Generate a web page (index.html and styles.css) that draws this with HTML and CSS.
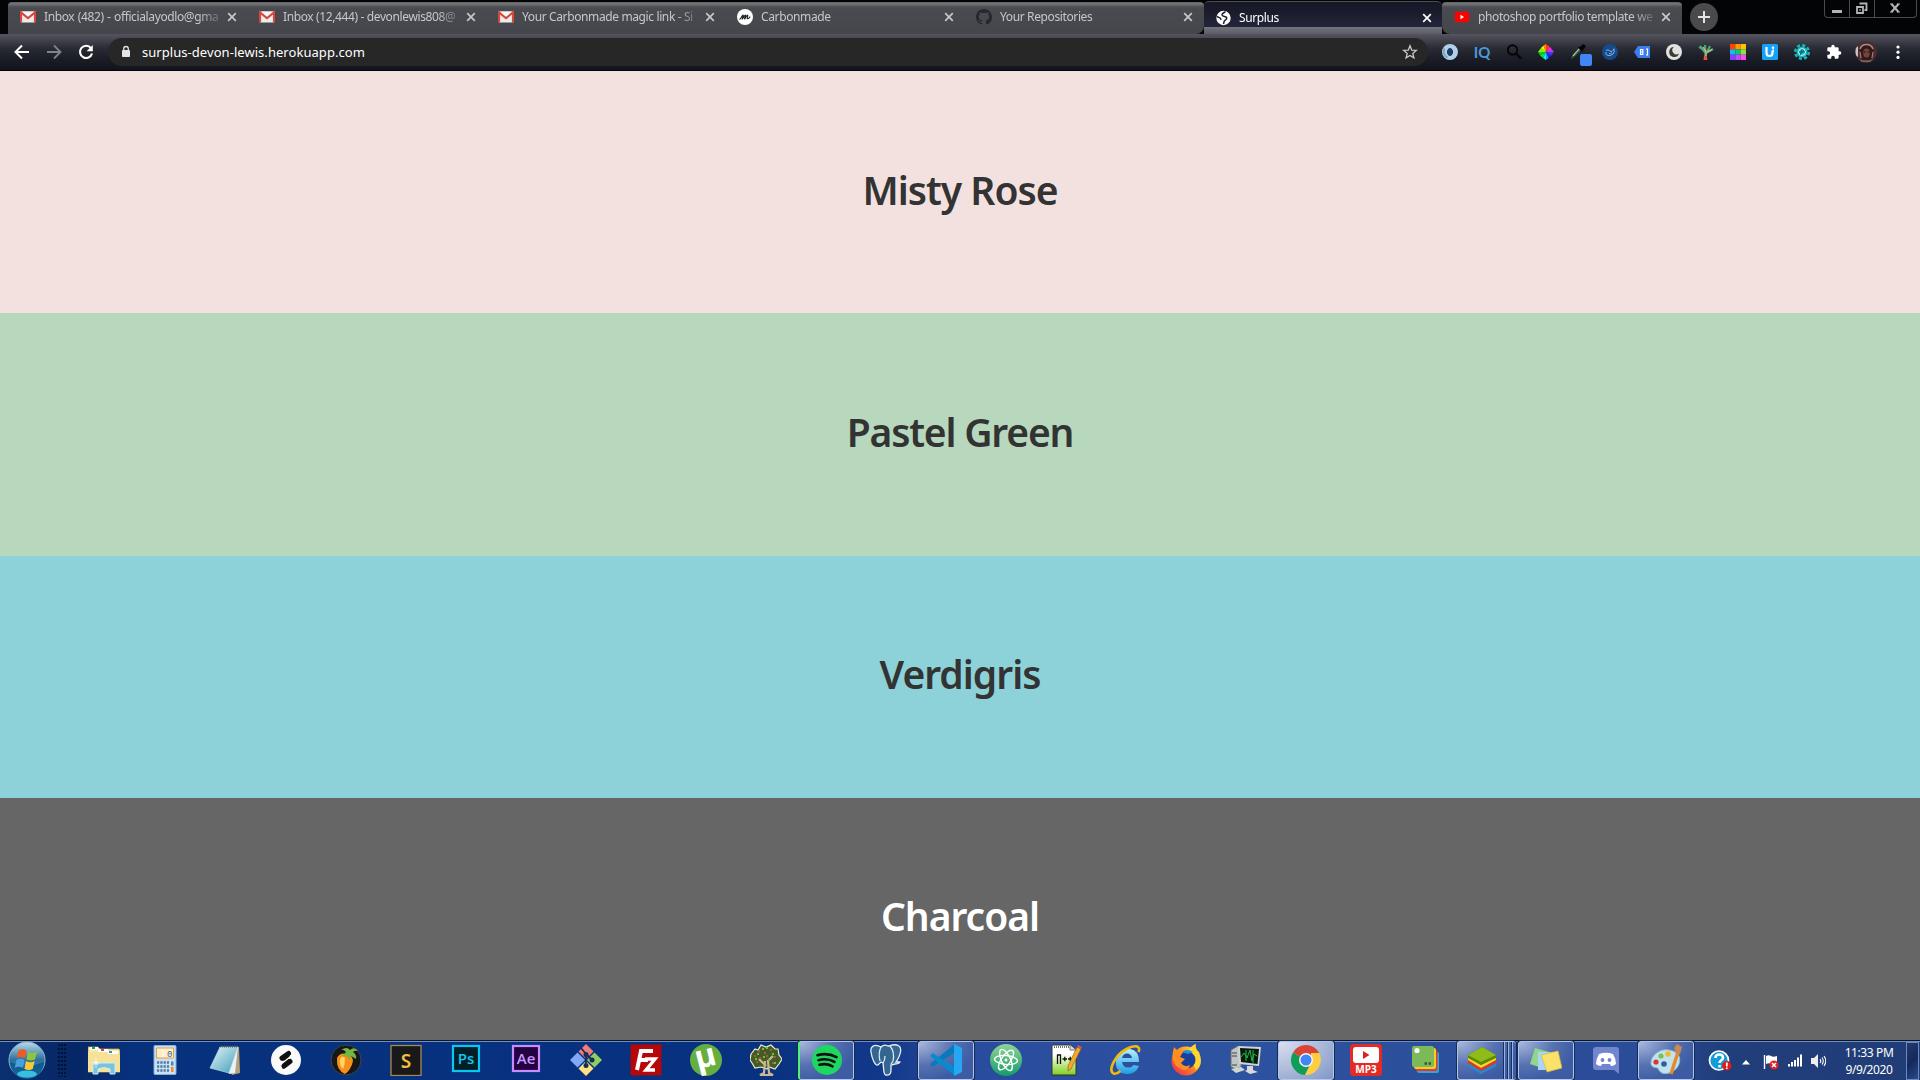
FILE: index.html
```html
<!DOCTYPE html>
<html lang="en">
<head>
<meta charset="utf-8">
<title>Surplus</title>
<link rel="stylesheet" href="styles.css">
</head>
<body>
<svg class="defs" width="0" height="0" aria-hidden="true">
  <defs>
    <linearGradient id="glass" x1="0" y1="0" x2="0" y2="1"><stop offset="0" stop-color="#b9dcea"/><stop offset=".5" stop-color="#2b6f9c"/><stop offset="1" stop-color="#1fb4e8"/></linearGradient>
    <linearGradient id="folder" x1="0" y1="0" x2="0" y2="1"><stop offset="0" stop-color="#fbefb4"/><stop offset="1" stop-color="#e6c862"/></linearGradient>
    <linearGradient id="pad" x1="0" y1="0" x2="1" y2="1"><stop offset="0" stop-color="#e5f6fa"/><stop offset="1" stop-color="#3e9cb8"/></linearGradient>
    <linearGradient id="fire" x1="1" y1="0" x2="0" y2="1"><stop offset="0" stop-color="#fff13a"/><stop offset=".45" stop-color="#ff8a1c"/><stop offset="1" stop-color="#e8205c"/></linearGradient>
    <linearGradient id="npp" x1="0" y1="0" x2="0" y2="1"><stop offset=".3" stop-color="#fff"/><stop offset="1" stop-color="#7fd01c"/></linearGradient>
    <linearGradient id="ie" x1="0" y1="0" x2="0" y2="1"><stop offset="0" stop-color="#b8f0ff"/><stop offset="1" stop-color="#1b9de2"/></linearGradient>
    <linearGradient id="atom" x1="0" y1="0" x2="0" y2="1"><stop offset="0" stop-color="#8fd694"/><stop offset="1" stop-color="#149b6c"/></linearGradient>
    <symbol id="gmail" viewBox="0 0 16 16"><path d="M1 2.5h14v11H1z" fill="#ececec"/><path d="M1 13.500V3.500L8 9l7-5.500v10" fill="none" stroke="#d8483a" stroke-width="2.200"/><path d="M2 2.500h12L8 7.500z" fill="#f5f5f5"/></symbol>
    <symbol id="close" viewBox="0 0 10 10"><path d="M1.200 1.200l7.600 7.600M8.800 1.200L1.200 8.800" stroke="currentColor" stroke-width="1.700"/></symbol>
  </defs>
</svg>

<header class="browser">
  <div class="tabstrip">
    <div class="tab first"><svg class="fav"><use href="#gmail"/></svg><span class="tab-title spaced">Inbox (482) - officialayodlo@gma</span><svg class="close"><use href="#close"/></svg></div>
    <div class="tab"><svg class="fav"><use href="#gmail"/></svg><span class="tab-title">Inbox (12,444) - devonlewis808@</span><svg class="close"><use href="#close"/></svg></div>
    <div class="tab"><svg class="fav"><use href="#gmail"/></svg><span class="tab-title">Your Carbonmade magic link - Si</span><svg class="close"><use href="#close"/></svg></div>
    <div class="tab"><svg class="fav" viewBox="0 0 16 16"><circle cx="8" cy="8" r="8" fill="#fff"/><path d="M2.500 10.500c1.500-.5 2.500-4.500 3.500-4.500s-1.300 4-.8 4S7.500 6 8.300 6s-1.200 4-.7 4 2-4 2.900-4-.8 3.500-.3 3.700 2-.7 3-2" fill="none" stroke="#222" stroke-width="1.100"/></svg><span class="tab-title">Carbonmade</span><svg class="close"><use href="#close"/></svg></div>
    <div class="tab before-active"><svg class="fav" viewBox="0 0 16 16"><path fill="#24292e" d="M8 0C3.580 0 0 3.580 0 8c0 3.540 2.290 6.530 5.470 7.590.4.070.55-.17.55-.38v-1.490c-2.010.37-2.530-.49-2.690-.94-.09-.23-.48-.94-.82-1.130-.28-.15-.68-.52-.01-.53.63-.01 1.080.58 1.230.82.720 1.210 1.870.87 2.330.66.070-.52.280-.87.510-1.070-1.780-.2-3.640-.89-3.640-3.950 0-.87.310-1.590.82-2.150-.08-.2-.36-1.020.080-2.120 0 0 .67-.21 2.200.82a7.600 7.600 0 014 0c1.530-1.040 2.200-.82 2.200-.82.440 1.100.160 1.920.080 2.120.51.560.82 1.270.82 2.150 0 3.070-1.870 3.750-3.650 3.950.29.250.54.730.54 1.480v2.200c0 .21.150.46.550.38A8 8 0 0016 8c0-4.420-3.580-8-8-8z"/></svg><span class="tab-title">Your Repositories</span><svg class="close"><use href="#close"/></svg></div>
    <div class="tab active"><svg class="fav" viewBox="0 0 16 16"><circle cx="7.500" cy="8" r="7.200" fill="#fff"/><path d="M9.500 1.500C8 3 6 3 6 4.800S8.500 6.300 10 7s.5 2.500-.8 3.200-1.200 2-1.700 3.800" fill="none" stroke="#20222e" stroke-width="1.500"/><path d="M1 6.500l3.300 1.700.8 1.600" fill="none" stroke="#20222e" stroke-width="1.500"/></svg><span class="tab-title">Surplus</span><svg class="close"><use href="#close"/></svg></div>
    <div class="tab last"><svg class="fav" viewBox="0 0 16 16"><rect x=".8" y="2.800" width="14.400" height="10.400" rx="2.500" fill="#f00"/><path d="M6.500 5.800v4.400L10 8z" fill="#fff"/></svg><span class="tab-title">photoshop portfolio template we</span><svg class="close"><use href="#close"/></svg></div>
    <div class="new-tab"><svg width="14" height="14" viewBox="0 0 14 14"><path d="M7 1v12M1 7h12" stroke="#e3e3e3" stroke-width="2"/></svg></div>
    <div class="window-buttons">
      <span><svg width="12" height="12" viewBox="0 0 12 12"><path d="M1 8h10v3H1z" fill="#b4b4b4"/></svg></span>
      <span><svg width="12" height="12" viewBox="0 0 12 12"><path d="M3.500 1.500H10.500v6.500H8.500M1 5h6v6H1z" fill="none" stroke="#b4b4b4" stroke-width="1.800"/><path d="M3.300 7.300h1.500v1.500H3.300z" fill="#b4b4b4"/></svg></span>
      <span><svg width="12" height="12" viewBox="0 0 12 12"><path d="M2.500 2l7 8M9.500 2l-7 8" stroke="#b4b4b4" stroke-width="2"/><path d="M1 2h3M8 2h3M1 10h3M8 10h3" stroke="#b4b4b4"/></svg></span>
    </div>
  </div>

  <div class="toolbar">
    <div class="nav">
      <svg viewBox="0 0 16 16"><path d="M15 8H2.500M8 1.500L1.500 8 8 14.500" fill="none" stroke="#fff" stroke-width="2"/></svg>
      <svg viewBox="0 0 16 16"><path d="M1 8h12.500M8 1.500L14.500 8 8 14.500" fill="none" stroke="#81828a" stroke-width="1.800"/></svg>
      <svg viewBox="0 0 16 16"><path d="M13 4.200A6.100 6.100 0 1 0 14 9.500" fill="none" stroke="#fff" stroke-width="2.100"/><path d="M14.800 1v6.200H8.600z" fill="#fff"/></svg>
    </div>
    <div class="omnibox">
      <svg class="lock" viewBox="0 0 10 14"><rect x="1" y="5" width="8" height="7" rx=".8" fill="#e4e4e4"/><path d="M2.700 5.500V3.800a2.300 2.300 0 0 1 4.600 0v1.700" fill="none" stroke="#e4e4e4" stroke-width="1.300"/></svg>
      <span class="url">surplus-devon-lewis.herokuapp.com</span>
      <svg class="star" viewBox="0 0 16 16"><path d="M8 1.800l1.700 4.300 4.600.3-3.500 3 1.100 4.500L8 11.500l-3.900 2.400 1.100-4.500-3.500-3 4.600-.3z" fill="none" stroke="#c9c9c9" stroke-width="1.300"/></svg>
    </div>
    <div class="extensions">
      <span><svg viewBox="0 0 16 16"><circle cx="8" cy="8" r="5.500" fill="none" stroke="#b4cfe8" stroke-width="5"/><path d="M2.500 4.500a6.500 6.500 0 0 0 3 9" fill="none" stroke="#7ea6cb" stroke-width="2"/><ellipse cx="8" cy="8" rx="2.500" ry="4" fill="#1b3c63"/></svg></span>
      <span class="iq">IQ</span>
      <span><svg viewBox="0 0 16 16"><circle cx="6.500" cy="6" r="4.700" fill="none" stroke="#050505" stroke-width="1.900"/><path d="M10 9.500l5 5" stroke="#050505" stroke-width="2.400"/></svg></span>
      <span><svg viewBox="0 0 16 16"><path d="M8 8V0l4 3z" fill="#f33"/><path d="M8 8l4-5 2 2.500z" fill="#f3c"/><path d="M8 8l6-2.500L16 8z" fill="#c3f"/><path d="M8 8h8l-3 4z" fill="#43f"/><path d="M8 8l5 4-2.500 2z" fill="#22f"/><path d="M8 8l2.500 6L8 16z" fill="#19e"/><path d="M8 8v8l-3-2z" fill="#1ee"/><path d="M8 8l-3 6-3-2.500z" fill="#1d6"/><path d="M8 8l-6 3.500L0 8z" fill="#1c1"/><path d="M8 8H0l3-4z" fill="#7f0"/><path d="M8 8L3 4l2.500-2.500z" fill="#fe0"/><path d="M8 8L5.500 1.500 8 0z" fill="#f80"/></svg></span>
      <span><svg viewBox="0 0 16 16"><path d="M1 15l2-5 6-6 2 2-6 6z" fill="#3d6b4c"/><path d="M3 12l6-7" stroke="#c5d9c9"/><path d="M8 3l2.500-.5L13 0l3 2-2.500 3.500L12 8z" fill="#050505"/></svg><i class="badge"></i></span>
      <span><svg viewBox="0 0 16 16"><circle cx="8" cy="8" r="8" fill="#154a8b"/><path d="M4 6.500q2-1.500 4 .5t4-2.500M12 5q1 3-1 5t-5 1.500-2-3.500M7 9.500q1.500 1 3-1" fill="none" stroke="#8bb0d7" stroke-width="1"/></svg></span>
      <span><svg viewBox="0 0 16 16"><path d="M0 8l4-6h12v12H4z" fill="#3d7cf0"/><path d="M6.500 5v6M6.500 5.500h2.300v5H6.500M6.500 8h2.300M12 5h1.500v6H12" fill="none" stroke="#fff" stroke-width="1.200"/></svg></span>
      <span><svg viewBox="0 0 16 16"><circle cx="8" cy="8" r="8" fill="#e2e2df"/><path d="M8 3a5 5 0 1 0 5 6.500A3.800 3.800 0 0 1 8 3z" fill="#3b3b3b"/></svg></span>
      <span><svg viewBox="0 0 16 16"><path d="M7.200 14l.3-5L2 2M8 9l7-4M7.500 8L7 1M9 8l3-6M7 7L1 3" fill="none" stroke="#4caa79" stroke-width="2.100"/><path d="M5.500 16l.5-4 2.500-1 1 5z" fill="#e65443"/><path d="M8 8L5 3M9 8l5-2.500M8 8v4" stroke="#dfb884" stroke-width="1.200"/></svg></span>
      <span><svg viewBox="0 0 16 16"><path d="M0 0h5.300v5.300H0z" fill="#f40"/><path d="M5.300 0h5.400v5.300H5.300z" fill="#f90"/><path d="M10.700 0H16v5.300h-5.300z" fill="#ffc400"/><path d="M0 5.300h5.300v5.400H0z" fill="#1ab8f5"/><path d="M5.300 5.300h5.400v5.400H5.300z" fill="#12c56f"/><path d="M10.700 5.300H16v5.400h-5.300z" fill="#8de24a"/><path d="M0 10.700h5.300V16H0z" fill="#8540ff"/><path d="M5.300 10.700h5.400V16H5.300z" fill="#b74cff"/><path d="M10.700 10.700H16V16h-5.300z" fill="#ff4ce8"/></svg></span>
      <span><svg viewBox="0 0 16 16"><rect width="16" height="16" rx="1.500" fill="#14a2fb"/><path d="M4.500 3v6a3 3 0 0 0 6 0V6.500M10.500 6.500H12" fill="none" stroke="#fff" stroke-width="2.200"/><circle cx="11" cy="3.800" r="1.200" fill="#fff"/></svg></span>
      <span><svg viewBox="0 0 16 16"><circle cx="8" cy="8" r="6.800" fill="none" stroke="#18b9bd" stroke-width="2.400" stroke-dasharray="3.200 2.140"/><circle cx="8" cy="8" r="5.500" fill="#18b9bd"/><circle cx="8" cy="8" r="3.400" fill="none" stroke="#d8ffff" stroke-width=".9"/><path d="M5 8h6M8 5l-1.500 6M10 6l-4 4" stroke="#0d5964" stroke-width=".9"/></svg></span>
      <span><svg viewBox="0 0 24 24"><path fill="#fff" d="M20.500 11H19V7a2 2 0 0 0-2-2h-4V3.500a2.500 2.500 0 0 0-5 0V5H4a2 2 0 0 0-2 2v3.800h1.500a2.700 2.700 0 0 1 0 5.400H2V20a2 2 0 0 0 2 2h3.800v-1.500a2.700 2.700 0 0 1 5.400 0V22H17a2 2 0 0 0 2-2v-4h1.500a2.500 2.500 0 0 0 0-5z"/></svg></span>
      <span><svg class="avatar" viewBox="0 0 22 22"><circle cx="11" cy="11" r="11" fill="#4b2c2c"/><path d="M1 7l2-2v11l-1.500-1a11 11 0 0 1-.5-8z" fill="#c9c4c4"/><path d="M5 10c0-8 12-9 13 0l-2 9H7z" fill="#32191c"/><path d="M5 8c2-6 11-6 13 0" stroke="#a48e8c" stroke-width="1.500" fill="none"/><ellipse cx="11.500" cy="12" rx="3.200" ry="4.500" fill="#754739"/><path d="M9 11h2m1.500 0h2" stroke="#20100f"/><path d="M5 11l1 6M18 11l-1 6" stroke="#9a8280" stroke-width="1.200"/><path d="M4 18q7 3 14 0l-3 3H7z" fill="#7c6260"/></svg></span>
      <span><svg viewBox="0 0 16 16"><circle cx="8" cy="3" r="1.600" fill="#fff"/><circle cx="8" cy="8.200" r="1.600" fill="#fff"/><circle cx="8" cy="13.400" r="1.600" fill="#fff"/></svg></span>
    </div>
  </div>
</header>

<main class="palette">
  <section class="swatch rose"><h1>Misty Rose</h1></section>
  <section class="swatch green"><h1>Pastel Green</h1></section>
  <section class="swatch verdigris"><h1>Verdigris</h1></section>
  <section class="swatch charcoal"><h1>Charcoal</h1></section>
</main>

<footer class="taskbar">
  <div class="start"><svg width="38" height="38" viewBox="0 0 38 38"><circle cx="19" cy="19" r="18" fill="url(#glass)" stroke="#8fb6d1" stroke-width="1"/><path d="M2 21q17 7 34 0A17 17 0 0 1 2 21" fill="#0a4d83" opacity=".75"/><ellipse cx="19" cy="33" rx="10" ry="3.500" fill="#42d4f6" opacity=".8"/><path d="M10.500 9.500q4-2.500 8 .2L17 17.500q-4-2.600-8.300-.3z" fill="#ee5a24"/><path d="M20 10.500q4.500 2.500 9 0l-2 8q-4 2.200-8.500 0z" fill="#8cc63e"/><path d="M8.400 19q4-2.500 8.200 0L15 27q-4-2.500-8.300 0z" fill="#4a9fe0"/><path d="M18 20q4.500 2.400 8.700 0l-2 8q-4.200 2.200-8.300-.2z" fill="#fcc930"/></svg></div>
  <div class="grip"></div>
  <nav class="apps">
    <span class="app"><svg class="explorer" viewBox="0 0 32 32"><path d="M0 3h10l2 2h19l1 2v21H0z" fill="url(#folder)" stroke="#c9a64c" stroke-width=".8"/><path d="M2 3h8v3H2z" fill="#fff"/><path d="M4 3h3v2H4z" fill="#1aa64a"/><path d="M10 5h10v3H10z" fill="#fff"/><path d="M13 5h3v2h-3z" fill="#d24536"/><path d="M20 7h10v3H20z" fill="#fff"/><path d="M21 7h3v2h-3z" fill="#2c8ddb"/><path d="M0 8h18l2 3h12v17H0z" fill="#f5e296"/><path d="M5 30V19h22v11h-5v-5q-6-3-12 0v5z" fill="#79c3e2" stroke="#c9edf8"/><path d="M8 14v10M4 19h8M6 17l4 4M10 17l-4 4" stroke="#fff" stroke-width=".7"/></svg></span>
    <span class="app"><svg class="nudge" viewBox="0 0 32 32"><rect x="5" y="1.500" width="22" height="29" rx="1" fill="#c7e2f4" stroke="#7fb2d8"/><path d="M7.500 4h17v10h-17z" fill="#fff0d0" stroke="#ed9a3c"/><text x="18" y="13" class="calc-digit">0</text><path d="M8 18.500h12M8 22.500h12M8 26.500h12" stroke="#54789d" stroke-width="2.500" stroke-dasharray="2.200 1.100"/><path d="M22 17.500h2.500v4H22z" fill="#5c82ab"/><path d="M22 23h2.500v5H22z" fill="#f28f27"/></svg></span>
    <span class="app"><svg class="nudge" viewBox="0 0 32 32"><path d="M10 3h20l1 26-8 2z" fill="#b7a17b"/><path d="M11 3h18l-3 26-6 1z" fill="#eaf2f3"/><path d="M11 3h18L20 29 1 24z" fill="url(#pad)" stroke="#c7e8f1" stroke-width=".6"/><path d="M11 2.500h18" stroke="#555" stroke-width="2" stroke-dasharray="1 1"/></svg></span>
    <span class="app"><svg viewBox="0 0 32 32"><circle cx="16" cy="16" r="15" fill="#fafafa"/><g fill="none" stroke="#101010" stroke-width="5" stroke-linejoin="round" stroke-linecap="round"><path d="M12 14l6.500-4.500M14 22l6-4.500"/></g><path d="M16.500 8.500l3-1.500v5.500l-5 4-3 .5zM15 24l-2.500 1v-5l6-5h2.500z" fill="#101010"/></svg></span>
    <span class="app"><svg viewBox="0 0 32 32"><circle cx="16" cy="16" r="15" fill="#151718" stroke="#40464c"/><path d="M7 14q3-6 9-4 7 1 7 7-2 9-8 13-9-4-8-16" fill="#f98e19"/><path d="M10 15q2-4 5-1 0 7-2 11-4-4-3-10" fill="#ffd563"/><path d="M10 11q4 0 6-3-3-3-5-2 6-4 9 0 4-4 8 1-3-1-5 1 4 3 3 7-3-2-5-3l-1 4q-3-5-10-5" fill="#71b843"/></svg></span>
    <span class="app"><svg viewBox="0 0 32 32"><rect x="1" y="1.500" width="30" height="30" fill="#19191a" stroke="#a78952" stroke-width="1.300"/><text x="16" y="23.500" class="ico-s">S</text></svg></span>
    <span class="app"><svg viewBox="0 0 32 32"><rect x="3" y="2" width="26" height="25" fill="#011f29" stroke="#08c7f3" stroke-width="2.200"/><text x="16" y="20" class="ico-ps">Ps</text></svg></span>
    <span class="app"><svg viewBox="0 0 32 32"><rect x="3" y="2" width="26" height="25" fill="#24023f" stroke="#c88cff" stroke-width="2.200"/><text x="16" y="20" class="ico-ae">Ae</text></svg></span>
    <span class="app"><svg viewBox="0 0 32 32"><path d="M16 0l7.500 7.500L16 15 8.500 7.500z" fill="#f17b7b"/><path d="M24.500 8.500L32 16l-7.500 7.500L17 16z" fill="#8fce61"/><path d="M7.500 8.500L15 16l-7.500 7.500L0 16z" fill="#80a9fa"/><path d="M16 17l7.500 7.500L16 32l-7.500-7.500z" fill="#ffe181"/><path d="M11 4l5 6v12M16 10l6 6" fill="none" stroke="#142e58" stroke-width="1.800"/><circle cx="16" cy="10.500" r="2.500" fill="#142e58"/><circle cx="16" cy="21.500" r="2.500" fill="#142e58"/><circle cx="22" cy="16" r="2.500" fill="#142e58"/></svg></span>
    <span class="app"><svg viewBox="0 0 32 32"><rect x="1.200" y="1.200" width="29.600" height="29.600" fill="#b70708" stroke="#b70708" stroke-width="2" stroke-dasharray="2 1.200"/><path d="M7 26l4-19h12M9 16h9" fill="none" stroke="#fff" stroke-width="4"/><path d="M15 15h10l-9 11h9" fill="none" stroke="#fff" stroke-width="3.400"/></svg></span>
    <span class="app"><svg viewBox="0 0 32 32"><circle cx="16" cy="16" r="16" fill="#67ae40"/><text x="16" y="23" transform="rotate(-14 16 16)" class="ico-mu">µ</text></svg></span>
    <span class="app"><svg viewBox="0 0 32 32"><path d="M1 10l4-5 3 1 3-5 5 2 5-2 4 4 3 0 1 6 3 4-3 5-4 5-6-2-2 2-6-2-6 1-3-5-2-3z" fill="#3f5f22" stroke="#efead2" stroke-width="1.200"/><path d="M15 17l-1 12-4 2h13l-4-2-1-12 5-5M16 22l-7-7" fill="none" stroke="#cdb694" stroke-width="2.200"/><path d="M4 12h2m2-5h2m4 2h2m4-3h2m2 7h2m-17 1h2m-5 4h2m14 1h2m-8-7h2" stroke="#b5523c" stroke-width="2"/><path d="M7 10h2m4 3h2m7-3h2m-6 6h2m4 3h2M5 15h2m9-11h2m-6 1h2" stroke="#86ad55" stroke-width="2"/></svg></span>
    <span class="app open playing"><svg viewBox="0 0 32 32"><circle cx="16" cy="16" r="15" fill="#1ed760"/><path d="M6.500 11.200q10-3 19 2M7.500 16.200q8.500-2.400 16 1.700M8.500 20.800q7-1.800 13 1.500" fill="none" stroke="#101010" stroke-width="2.600" stroke-linecap="round"/></svg></span>
    <span class="app"><svg viewBox="0 0 32 32"><path d="M11 3C4-1 0 3 1 8c1 7 4 14 7 13l3-3 2 1c1 5 0 12 3 12 6 1 5-5 5-10l4-1c2 0 5-1 5-2l-4 0c3-4 7-13 3-16-5-3-9 0-11 0-2-1-5-1-7 1z" fill="#336791" stroke="#e5edf3" stroke-width="1.300"/><path d="M11 3q-3 6-1 14M20 2q5 6 3 15l-2 3M13 19q2-3 2-7" fill="none" stroke="#e5edf3" stroke-width="1.200"/></svg></span>
    <span class="app open"><svg viewBox="0 0 32 32"><path d="M24 1L0 20l2.500 3L24 9z" fill="#0779bd"/><path d="M24 31L0 12l2.500-3L24 23z" fill="#078bd0"/><path d="M24 0l8 4v24l-8 4z" fill="#25a8f1"/></svg></span>
    <span class="app"><svg viewBox="0 0 32 32"><circle cx="16" cy="16" r="16" fill="url(#atom)"/><g fill="none" stroke="#fff" stroke-width="1.400"><ellipse cx="16" cy="16" rx="4.500" ry="11.500" transform="rotate(-25 16 16)"/><ellipse cx="16" cy="16" rx="4.500" ry="11.500" transform="rotate(35 16 16)"/><ellipse cx="16" cy="16" rx="4.500" ry="11.500" transform="rotate(95 16 16)"/></g><circle cx="16" cy="16" r="1.500" fill="#fff"/></svg></span>
    <span class="app"><svg viewBox="0 0 32 32"><path d="M2 1h18l6 5v25H2z" fill="url(#npp)" stroke="#333"/><path d="M20 1v5h6" fill="#ddd" stroke="#777"/><path d="M4 3h15" stroke="#777" stroke-width="2" stroke-dasharray="1 1"/><path d="M7.500 20v-9h3v9M12.500 15h4.500M14.800 12.700v4.600M18 15h4.500M20.300 12.700v4.600" fill="none" stroke="#111" stroke-width="1.300"/><path d="M27 3l4 2-10 20-3 2v-5z" fill="#f5a928" stroke="#8b541c" stroke-width=".6"/><path d="M28 1l4 2-1 2-4-2z" fill="#d65551"/></svg></span>
    <span class="app"><svg viewBox="0 0 32 32"><path d="M27.500 18H12q1 6 7 5.500 3 0 4.500-2.500l5.500 1q-4 9-13 8C8 29 5 23 6 16S13 4 20 5q9 1 9 13z" fill="url(#ie)"/><path d="M12 14h10q-1-4.500-5-4.500T12 14" fill="#2851a0"/><path d="M28.500 8c3-7-5-7-12-3C5.500 11-2.500 26 3.500 29.500q3 1 7-2.500" fill="none" stroke="#f2b90b" stroke-width="2.600"/></svg></span>
    <span class="app"><svg viewBox="0 0 32 32"><circle cx="16" cy="17" r="14.500" fill="url(#fire)"/><path d="M19 5q5-5 7-5-1 5 3 8 5 13-3 18l-5-10z" fill="#ffd42e"/><circle cx="17" cy="16" r="8.500" fill="#173f9c"/><path d="M4 3q4 5 9 5l-3 5 5 2-4 4q3 5 9 2-2 7-9 4Q-1 20 4 3" fill="#ff8e20"/><path d="M12 8q5-4 11 0l-5 2z" fill="#1d91df"/></svg></span>
    <span class="app"><svg viewBox="0 0 32 32"><path d="M1 6l7-4 3 2v19l-5 2-5-2z" fill="#bfc4c6" stroke="#66716e"/><path d="M2 9h5m-5 3h5m-5 9h5" stroke="#444"/><path d="M8 2l23 1-2 19-20-2z" fill="#d1d4d0"/><path d="M10 4l19 1-1.500 15L11 18z" fill="#071b10"/><path d="M11 13l3-4 3 5 3-8 2 11 2-7 3 2M16 6v11M23 6v13" fill="none" stroke="#28b943"/><path d="M17 22h6v4l5 2-8 2-5-3 2-1z" fill="#d8dada"/><path d="M1 25l10-2 4 3-9 3z" fill="#cfd4d5"/></svg></span>
    <span class="app open front"><svg viewBox="0 0 32 32"><path d="M16 16L3 8.500A15 15 0 0 1 29 8.500z" fill="#da4437"/><path d="M3 8.500A15 15 0 0 0 15 31l6-12-5-3z" fill="#0f9d58"/><path d="M29 9A15 15 0 0 1 15 31l6-12V9z" fill="#ffcd40"/><circle cx="16" cy="16" r="7" fill="#f4f4f4"/><circle cx="16" cy="16" r="5.500" fill="#4285f4"/></svg></span>
    <span class="app"><svg viewBox="0 0 32 32"><rect width="32" height="32" rx="3.500" fill="#e22b27"/><rect x="3" y="3" width="26" height="16" rx="3" fill="#fff"/><path d="M13 7l6.500 4-6.500 4z" fill="#d8251f"/><text x="16" y="29" class="mp3">MP3</text></svg></span>
    <span class="app"><svg viewBox="0 0 32 32"><rect x="7" y="8" width="22" height="21" rx="2" fill="#28a9dc"/><rect x="5.500" y="6" width="22" height="21" rx="2" fill="#e5382e"/><rect x="4" y="4" width="22" height="21" rx="2" fill="#f7cc29"/><rect x="2" y="2" width="22" height="21" rx="2" fill="#7cb958"/><circle cx="7" cy="6.500" r="2.600" fill="#fff"/><path d="M14.500 19.500h2.500m1.500 0h2.500" stroke="#315c25" stroke-width="2.300"/></svg></span>
    <span class="app open stacked"><svg viewBox="0 0 32 32"><path d="M2 19l13 8 15-8v3l-15 8-13-8z" fill="#1e8ed1"/><path d="M2 16l13 8 15-8v3l-15 8-13-8z" fill="#e2352a"/><path d="M2 13l13 8 15-8v3l-15 8-13-8z" fill="#ffd51f"/><path d="M2 11L16 3l14 8v3l-15 7-13-7z" fill="#5d8a05"/><path d="M2 11L16 3l14 8-15 7z" fill="#8fbc18"/></svg><i></i><i></i><i></i></span>
    <span class="app open"><svg viewBox="0 0 32 32"><path d="M5 4l14 4-4 17L0 20z" fill="#90d68d"/><path d="M8 8h17v18H8z" fill="#a9d5f6"/><path d="M11 11l17-4 4 17-15 4z" fill="#f9e269" stroke="#d6b63e" stroke-width=".7"/></svg></span>
    <span class="app"><svg viewBox="0 0 32 32"><path d="M6 3h20a3 3 0 0 1 3 3v24l-5-4H6a3 3 0 0 1-3-3V6a3 3 0 0 1 3-3z" fill="#7186cf"/><path d="M9 10q7-2.500 14 0 3 5 3 10-3 2.500-5 2l-1-2h-8l-1 2q-3 0-5-2 0-5 3-10" fill="#fff"/><circle cx="12.500" cy="16" r="1.900" fill="#7186cf"/><circle cx="19.500" cy="16" r="1.900" fill="#7186cf"/></svg></span>
    <span class="app open"><svg viewBox="0 0 32 32"><path d="M19 6C10 4 0 12 1 20c1 5 7 2 8 6 3 7 17 3 20-6 3-10-4-13-10-14z" fill="#c1e3f0" stroke="#8dbbd4"/><circle cx="6" cy="18" r="2.600" fill="#d9363a"/><circle cx="11" cy="12" r="2.600" fill="#7bc04b"/><circle cx="18" cy="10" r="2.700" fill="#f2bb22"/><circle cx="14" cy="20" r="2.800" fill="#315e9c"/><path d="M29 5L21 30" stroke="#e58a2b" stroke-width="3.500"/><path d="M24 4l3-4 5 3-2 7-4-1z" fill="#c88a51"/></svg></span>
  </nav>
  <div class="tray">
    <svg class="help" viewBox="0 0 24 24"><circle cx="11" cy="11.500" r="9.500" fill="#159bd7" stroke="#fff" stroke-width="1.700"/><path d="M7.500 9q0-3.500 3.700-3.500T15 8.700c0 2.500-3.500 2.500-3.500 5.300M11.500 16v2.500" fill="none" stroke="#fff" stroke-width="2.500"/><circle cx="18.800" cy="16.800" r="4.700" fill="#e01b1b"/><path d="M18.800 13.500v4M18.800 18.500v1.500" stroke="#fff" stroke-width="1.700"/></svg>
    <svg class="up" viewBox="0 0 8 5"><path d="M4 0l4 4.500H0z" fill="#fff"/></svg>
    <svg class="flag" viewBox="0 0 16 16"><path d="M1.500 1v14" stroke="#fff" stroke-width="1.400"/><path d="M3 2q3-1.500 5 0t6 0v8q-4 1.500-6 0t-5 0z" fill="#fff"/><circle cx="11" cy="11" r="4.600" fill="#da2323"/><path d="M9 9l4 4m0-4l-4 4" stroke="#fff" stroke-width="1.500"/></svg>
    <svg class="signal" viewBox="0 0 16 13"><path d="M1 12.500v-2.500h2v2.500zM4 12.500v-4.500h2v4.500zM7 12.500V6h2v6.500zM10 12.500v-9h2v9zM13 12.500v-12h2v12z" fill="#fff"/></svg>
    <svg class="volume" viewBox="0 0 16 16"><path d="M1 5h3l4-4v14l-4-4H1z" fill="#eee"/><path d="M10 6q1.500 2 0 4M12 4.500q2.500 3.500 0 7M14 3q3.500 5 0 10" fill="none" stroke="#fff" stroke-width="1.100"/></svg>
    <div class="clock"><span>11:33 PM</span><span>9/9/2020</span></div>
  </div>
  <div class="show-desktop"></div>
</footer>
</body>
</html>
```
FILE: styles.css
```css
* { box-sizing: border-box; }
html, body { margin: 0; height: 100%; }
body {
  display: flex;
  flex-direction: column;
  width: 1920px;
  height: 1080px;
  overflow: hidden;
  font-family: "Noto Sans", "Open Sans", sans-serif;
}
svg { display: block; flex: none; }
.defs { position: absolute; }

/* browser frame */
.browser { flex: none; height: 71px; background: #030405; }
.tabstrip { display: flex; height: 34px; padding-left: 8px; background: #030405; }
.tab {
  display: flex;
  align-items: center;
  width: 239px;
  height: 32px;
  margin-top: 2px;
  padding: 0 10px 2px 12px;
  color: #c6c7ca;
  background: linear-gradient(#5f6064 0, #75767a 2px, #56575b 4px, #4a4b51 6px, #45464b 100%);
  position: relative;
}
.tab::after {
  content: "";
  position: absolute;
  right: -1px;
  top: 4px;
  width: 1px;
  height: 21px;
  background: #8b8c90;
}
.tab.first { border-radius: 4px 0 0 0; }
.tab.before-active { width: 240px; padding-right: 11px; border-radius: 0 4px 8px 0; }
.tab.before-active::after, .tab.active::after, .tab.last::after { display: none; }
.tab.active {
  width: 238px;
  height: 33px;
  margin-top: 1px;
  padding-bottom: 1px;
  color: #fff;
  border-top: 1px solid #4d4e52;
  border-radius: 5px 5px 0 0;
  background: linear-gradient(#151725 0, #23253a 25px, #74757f 25px, #5b5c66 100%);
}
.tab.active .tab-title { margin: 0 8px 0 7px; }
.tab.last { width: 240px; padding-right: 11px; border-radius: 4px 4px 0 8px; }
.fav { width: 16px; height: 16px; }
.tab-title {
  flex: 1;
  margin: 0 6px 0 8px;
  height: 20px;
  overflow: hidden;
  white-space: nowrap;
  font-size: 12px;
  line-height: 19px;
  letter-spacing: -.38px;
  -webkit-mask-image: linear-gradient(90deg, #000 154px, transparent 182px);
  mask-image: linear-gradient(90deg, #000 154px, transparent 182px);
}
.tab-title.spaced { word-spacing: .7px; }
.close { width: 10px; height: 10px; }
.new-tab {
  display: grid;
  place-items: center;
  width: 28px;
  height: 28px;
  margin: 3px 0 0 8px;
  border-radius: 50%;
  background: #49494e;
}
.window-buttons {
  display: flex;
  width: 93px;
  height: 18px;
  margin: 0 3px 0 auto;
  border: 1px solid #4b4b4b;
  border-top: 0;
  border-radius: 0 0 4px 4px;
}
.window-buttons span { display: grid; place-items: center; width: 24px; padding-bottom: 1px; }
.window-buttons span + span { width: 25px; border-left: 1px solid #4b4b4b; }
.window-buttons span:last-child { width: 42px; padding-right: 2px; }

.toolbar {
  display: flex;
  align-items: center;
  height: 37px;
  padding-bottom: 1px;
  border-bottom: 1px solid #030408;
  background: linear-gradient(#55555f 0, #454650 5px, #292b35 14px, #1b1d27 24px, #11141d 100%);
}
.nav { display: flex; gap: 16px; padding-left: 14px; width: 108px; }
.nav svg { width: 16px; height: 16px; }
.omnibox {
  display: flex;
  align-items: center;
  width: 1320px;
  height: 28px;
  padding: 0 10px 0 13px;
  border-radius: 14px;
  background: #272727;
}
.lock { width: 10px; height: 14px; }
.url { margin-left: 11px; color: #fff; font-size: 13px; line-height: 18px; letter-spacing: .05px; }
.star { width: 16px; height: 16px; margin-left: auto; }
.extensions { display: flex; margin-left: 6px; }
.extensions span { display: grid; place-items: center; width: 32px; height: 28px; position: relative; }
.extensions svg { width: 16px; height: 16px; }
.extensions .avatar { width: 22px; height: 22px; }
.extensions .iq { color: #4d9ad6; font: 700 15px/16px Lato, sans-serif; }
.badge { position: absolute; left: 18px; top: 16px; width: 12px; height: 12px; border-radius: 2px; background: #4285f4; }

/* colour bands */
.palette { flex: 1; display: grid; grid-template-rows: repeat(4, 1fr); min-height: 0; }
.swatch { display: flex; justify-content: center; align-items: center; color: #333; }
.swatch h1 { margin: 0 0 5px; font-size: 39px; font-weight: 600; line-height: 48px; letter-spacing: -1px; }
.rose { background: #f3e1e0; }
.green { background: #b8d8be; }
.green h1 { letter-spacing: -1.2px; }
.verdigris { background: #8dd2d8; }
.charcoal { background: #666; color: #fff; }

/* desktop taskbar */
.taskbar {
  flex: none;
  display: flex;
  height: 40px;
  border-top: 1px solid #0a142b;
  box-shadow: inset 0 1px #6f8fc5;
  background: linear-gradient(90deg, #0b2f70 0, #062766 75px, #07307d 130px, #08317f 760px, #12388a 880px, #2a4c9e 980px, #2d529f 1220px, #2b4c98 1640px, #213e7c 1720px, #203d77 100%);
}
.start { width: 54px; padding: 0 0 0 8px; }
.grip {
  width: 8px;
  height: 33px;
  margin: 3px 10px 0 4px;
  background: radial-gradient(circle at 1px 1px, #021233 1px, transparent 1.300px) 0 0 / 3px 4px;
}
.apps { display: flex; }
.app {
  display: flex;
  justify-content: center;
  align-items: center;
  width: 56px;
  height: 39px;
  margin: 0 2px;
  padding-bottom: 1px;
}
.app svg { width: 32px; height: 32px; }
.app .explorer { margin-right: 5px; }
.app .nudge { margin-right: 3px; }
.app.open {
  border: 1px solid #b4c5e5;
  border-radius: 3px;
  box-shadow: 0 0 0 1px #142a57;
  background: radial-gradient(ellipse at 0 0, #aab8dc 0, #6d84bd88 45%, transparent 75%), #3d5ca3;
}
.app.playing { border-left: 2px solid #51ee78; }
.app.front { background: radial-gradient(ellipse at 0 0, #d9dff0 0, #acbad9 55%, #8096c8 100%); }
.app.stacked { justify-content: flex-start; width: 59px; margin: 0 0 0 1px; padding-left: 8px; border-right: 0; }
.app.stacked i { width: 4px; height: 37px; border-left: 1px solid #9eb3da; box-shadow: -1px 0 #182f60; }
.app.stacked svg { margin-right: 6px; }
.calc-digit { font: 9px "Liberation Mono", monospace; fill: #355d85; }
.ico-s, .ico-ps, .ico-ae, .ico-mu, .mp3 { text-anchor: middle; }
.ico-s { font: 600 19px "Noto Sans", sans-serif; fill: #f5bd3d; }
.ico-ps { font: 600 15px "Open Sans", sans-serif; fill: #12c6ef; }
.ico-ae { font: 600 15px "Open Sans", sans-serif; fill: #c994ff; }
.ico-mu { font: 700 32px "Open Sans", sans-serif; fill: #fff; }
.mp3 { font: 700 10px "Open Sans", sans-serif; fill: #fff; }
.tray { display: flex; align-items: center; width: 210px; padding-left: 12px; }
.help { width: 24px; height: 24px; }
.up { width: 8px; height: 5px; margin: 3px 0 0 10px; }
.flag { width: 16px; height: 16px; margin: 2px 0 0 13px; }
.signal { width: 16px; height: 13px; margin-left: 8px; }
.volume { width: 16px; height: 16px; margin-left: 7px; }
.clock {
  display: flex;
  flex-direction: column;
  align-items: center;
  width: 74px;
  margin-left: 6px;
  color: #fff;
  font-size: 12px;
  line-height: 17px;
  letter-spacing: -.4px;
}
.show-desktop {
  width: 13px;
  height: 38px;
  margin-top: 1px;
  border: 1px solid #6d89bb;
  background: linear-gradient(135deg, #233b6c, #14295b 50%, #294b8f);
}
```
